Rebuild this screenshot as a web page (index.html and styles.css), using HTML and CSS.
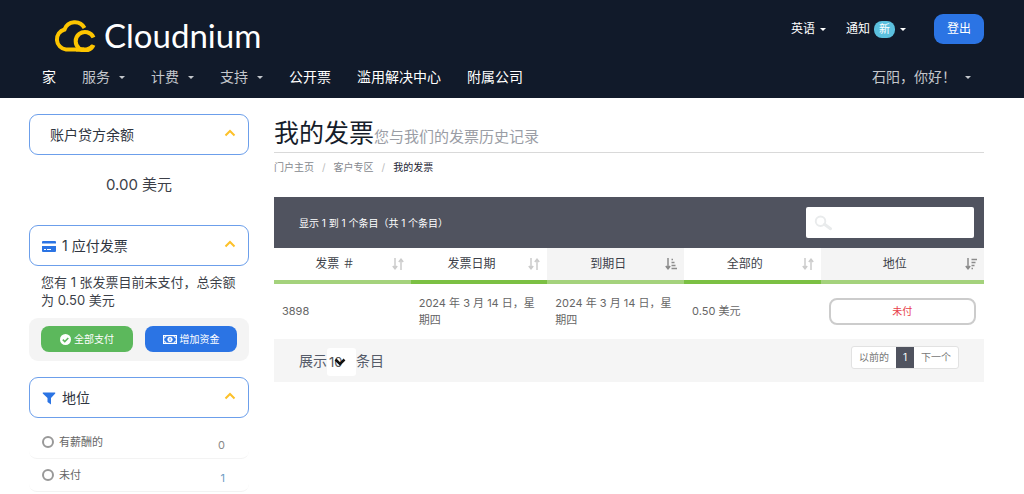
FILE: index.html
```
<!DOCTYPE html>
<html lang="zh-CN">
<head>
<meta charset="utf-8">
<title>我的发票 - Cloudnium</title>
<link rel="stylesheet" href="styles.css">
</head>
<body>
<header class="header">
  <div class="header-top">
    <a class="logo" href="#">
      <svg class="logo-mark" viewBox="0 0 42 34" fill="none" stroke="#fdc500" stroke-width="4">
        <path d="M30.500 10A11 11 0 0 0 10.500 11.500A10.200 10.200 0 0 0 12 31.500H30"/>
        <path d="M39.500 19.500A9.300 9.300 0 1 0 39.500 27"/>
        <path d="M22 31.500h8q5.500 0 8.500-3.500"/>
      </svg>
      <span>Cloudnium</span>
    </a>
    <div class="tools">
      <a class="tool" href="#">英语 <i class="caret"></i></a>
      <a class="tool" href="#">通知 <span class="badge">新</span><i class="caret"></i></a>
      <button class="logout" type="button">登出</button>
    </div>
  </div>
  <nav class="nav">
    <a href="#">家</a>
    <a class="muted" href="#">服务 <i class="caret"></i></a>
    <a class="muted" href="#">计费 <i class="caret"></i></a>
    <a class="muted" href="#">支持 <i class="caret"></i></a>
    <a href="#">公开票</a>
    <a href="#">滥用解决中心</a>
    <a href="#">附属公司</a>
    <a class="muted account" href="#">石阳，你好！ <i class="caret"></i></a>
  </nav>
</header>
<div class="page">
  <aside class="sidebar">
    <section>
      <h2 class="panel-title plain"><span>账户贷方余额</span>
        <svg class="chevron" viewBox="0 0 12 8"><path d="M1.500 6.500 6 2l4.500 4.500"/></svg></h2>
      <p class="balance">0.00 美元</p>
    </section>
    <section class="due">
      <h2 class="panel-title">
        <svg class="icon" viewBox="0 0 14 14" fill="#2b74e4"><path d="M1 2h12q1 0 1 1v1.500H0V3q0-1 1-1zM0 7h14v5q0 1-1 1H1q-1 0-1-1z"/><path d="M2 10.500h2M5 10.500h4" stroke="#fff"/></svg>
        <span>1 应付发票</span>
        <svg class="chevron" viewBox="0 0 12 8"><path d="M1.500 6.500 6 2l4.500 4.500"/></svg></h2>
      <p class="due-text">您有 1 张发票目前未支付，总余额为 0.50 美元</p>
      <div class="due-actions">
        <button class="btn green" type="button"><svg viewBox="0 0 11 11" width="11" height="11"><circle cx="5.500" cy="5.500" r="5.500" fill="#fff"/><path d="m2.800 5.600 2 2 3.500-3.600" fill="none" stroke="#5cb85c" stroke-width="1.600"/></svg>全部支付</button>
        <button class="btn blue" type="button"><svg viewBox="0 0 14 9" width="14" height="9" fill="none" stroke="#fff"><rect x=".6" y=".6" width="12.800" height="7.800" stroke-width="1.200"/><circle cx="7" cy="4.500" r="2.200" fill="#fff"/><path d="M1 3q1.500 0 2-2M13 3q-1.500 0-2-2M1 6q1.500 0 2 2M13 6q-1.500 0-2 2"/><path d="M7 3.200v2.600" stroke="#2b74e4"/></svg>增加资金</button>
      </div>
    </section>
    <section>
      <h2 class="panel-title">
        <svg class="icon" viewBox="0 0 14 14" fill="#2b74e4"><path d="M1 1.500h12q.8.500 0 1.200L9 7v6.500L5.500 11V7L1 2.700q-.8-.7 0-1.200z"/></svg>
        <span>地位</span>
        <svg class="chevron" viewBox="0 0 12 8"><path d="M1.500 6.500 6 2l4.500 4.500"/></svg></h2>
      <div class="filters">
        <label class="filter"><input type="radio" name="status"><span>有薪酬的</span><span class="count">0</span></label>
        <label class="filter"><input type="radio" name="status"><span>未付</span><span class="count active">1</span></label>
      </div>
    </section>
  </aside>
  <main class="main">
    <div class="heading"><h1>我的发票</h1><span>您与我们的发票历史记录</span></div>
    <nav class="crumbs"><a href="#">门户主页</a><i>/</i><a href="#">客户专区</a><i>/</i><b>我的发票</b></nav>
    <div class="table-bar">
      <span>显示 1 到 1 个条目（共 1 个条目）</span>
      <label class="search">
        <svg viewBox="0 0 22 18" width="22" height="18" fill="none" stroke="#e9ebec"><circle cx="7.500" cy="7" r="5.500" stroke-width="2.200"/><path d="m12 10.500 7 5" stroke-width="3.500" stroke-linecap="round"/></svg>
        <input type="search" aria-label="搜索">
      </label>
    </div>
    <table class="invoices">
      <thead>
        <tr>
          <th><div><span>发票 ＃</span><svg class="sort" viewBox="0 0 12 12"><path d="M3 0v10M.8 8 3 10.800 5.200 8M9 12V2M6.800 4 9 1.200 11.200 4"/></svg></div></th>
          <th><div><span>发票日期</span><svg class="sort" viewBox="0 0 12 12"><path d="M3 0v10M.8 8 3 10.800 5.200 8M9 12V2M6.800 4 9 1.200 11.200 4"/></svg></div></th>
          <th class="on"><div><span>到期日</span><svg class="sort" viewBox="0 0 12 12"><path d="M3 0v10M.8 8 3 10.800 5.200 8M6.500 1.500h1.500M6.500 4.500h3M6.500 7.500h4M6.500 10.500h5.500"/></svg></div></th>
          <th><div><span>全部的</span><svg class="sort" viewBox="0 0 12 12"><path d="M3 0v10M.8 8 3 10.800 5.200 8M9 12V2M6.800 4 9 1.200 11.200 4"/></svg></div></th>
          <th class="on"><div><span>地位</span><svg class="sort" viewBox="0 0 12 12"><path d="M3 0v10M.8 8 3 10.800 5.200 8M6.500 1.500h5.500M6.500 4.500h4M6.500 7.500h3M6.500 10.500h1.500"/></svg></div></th>
        </tr>
      </thead>
      <tbody>
        <tr><td>3898</td><td>2024 年 3 月 14 日，星期四</td><td>2024 年 3 月 14 日，星期四</td><td>0.50 美元</td><td><span class="status">未付</span></td></tr>
      </tbody>
    </table>
    <div class="table-foot">
      <label class="length">展示
        <span class="select"><select><option>10</option></select><svg viewBox="0 0 12 8"><path d="M1.500 1.500 6 6l4.500-4.500"/></svg></span>
        条目</label>
      <div class="pager"><a href="#">以前的</a><a class="current" href="#">1</a><a href="#">下一个</a></div>
    </div>
  </main>
</div>
</body>
</html>
```
FILE: styles.css
```
* { box-sizing: border-box; }
body {
  margin: 0;
  background: #fff;
  color: #3c3f48;
  font: 12px/16px Inter, "Noto Sans CJK SC", sans-serif;
  overflow-x: hidden;
}
a { color: inherit; text-decoration: none; }
h1, h2, p { margin: 0; font-weight: 400; }
button { border: 0; font: inherit; color: #fff; cursor: pointer; }

.header { background: #111a2a; color: #fff; padding: 14px 40px 11px 42px; }
.header-top { display: flex; justify-content: space-between; align-items: flex-start; }
.logo { display: flex; align-items: center; gap: 8px; padding: 3px 0 0 12px; font: 33px/36px Lato, sans-serif; }
.logo-mark { width: 42px; height: 34px; }
.tools { display: flex; align-items: center; gap: 20px; }
.tool { display: flex; align-items: center; gap: 4px; }
.badge { background: #5bc0de; border-radius: 8px; padding: 0 5px; font-size: 11px; line-height: 17px; }
.caret { display: inline-block; border: 3px solid transparent; border-top-color: currentColor; border-bottom: 0; margin-left: 1px; }
.logout { background: #2b74e4; border-radius: 9px; width: 50px; height: 30px; padding: 0; margin-left: 8px; }
.nav { display: flex; align-items: center; gap: 26px; margin-top: 14px; font-size: 14px; line-height: 20px; }
.nav > .muted { color: #c4c7cc; display: flex; align-items: center; gap: 8px; }
.nav > .account { margin-left: auto; padding-right: 13px; }

.page { display: grid; grid-template-columns: 220px minmax(0, 1fr); gap: 25px; padding: 16px 40px 0 29px; }
.panel-title { display: flex; align-items: center; gap: 6px; height: 41px; padding: 0 12px; border: 1px solid #6c9feb; border-radius: 9px; font-size: 14px; color: #2f3541; }
.plain { padding-left: 20px; }
.icon { width: 14px; height: 14px; }
.chevron { width: 12px; height: 8px; margin-left: auto; margin-bottom: 4px; fill: none; stroke: #fdc129; stroke-width: 2; }
.balance { padding: 20px 0 30px; text-align: center; font-size: 15px; line-height: 20px; }
.due-text { padding: 7px 12px 9px; font-size: 13px; line-height: 18px; }
.due-actions { display: grid; grid-template-columns: 1fr 1fr; gap: 12px; background: #f4f4f4; border-radius: 9px; padding: 8px 12px 9px; margin-bottom: 16px; }
.btn { display: flex; align-items: center; justify-content: center; gap: 3px; height: 26px; padding: 0; border-radius: 8px; font-size: 10px; }
.green { background: #5cb85c; }
.blue { background: #2b74e4; }
.filters { padding-top: 8px; }
.filter { display: flex; align-items: center; gap: 5px; height: 33px; padding: 0 24px 0 13px; border-bottom: 1px solid #f3f3f3; border-radius: 8px; font-size: 11px; color: #666; }
.filter input { appearance: none; width: 12px; height: 12px; margin: 0; border: 2px solid #999; border-radius: 50%; }
.count { margin-left: auto; padding-top: 5px; color: #888; }
.active { color: #6f9cc4; }

.heading { display: flex; align-items: baseline; border-bottom: 1px solid #d9d9d9; line-height: 20px; }
.heading h1 { font-size: 25px; line-height: 38px; color: #161d2b; }
.heading span { font-size: 15px; color: #9a9da5; }
.crumbs { display: flex; gap: 8px; padding-top: 6px; font-size: 10px; color: #85888e; }
.crumbs i { color: #bbb; font-style: normal; }
.crumbs b { font-weight: 400; color: #1d2533; }
.table-bar { display: flex; align-items: center; justify-content: space-between; margin-top: 22px; padding: 10px 10px 10px 25px; background: #50535f; color: #fff; font-size: 10px; }
.search { display: flex; align-items: center; width: 168px; height: 31px; padding: 0 8px; background: #fff; border-radius: 2px; }
.search input { width: 100%; border: 0; outline: 0; background: none; }
.invoices { width: 100%; table-layout: fixed; border-collapse: collapse; }
.invoices th { width: 19.25%; height: 34px; padding: 0 7px 0 0; border-bottom: 4px solid #7bc043; font-weight: 400; }
.invoices th:first-child, .invoices th.on { border-bottom-color: #a4d27c; }
.invoices th:last-child { width: 23%; }
.invoices th.on { background: #f4f4f4; }
.invoices th div { display: flex; align-items: center; }
.invoices th span { flex: 1; padding-left: 4px; }
.sort { width: 12px; height: 12px; fill: none; stroke: #ccc; stroke-width: 1.5; }
.on .sort { stroke: #8b8b8b; }
.invoices td { height: 57px; padding: 0 8px; font-size: 11px; line-height: 17px; color: #666; }
.status { display: block; border: 2px solid #ccc; border-radius: 8px; line-height: 23px; text-align: center; font-size: 10px; color: #e8404a; }
.table-foot { display: flex; align-items: flex-start; justify-content: space-between; padding: 7px 25px 6px; background: #f5f5f5; }
.length { display: flex; align-items: center; font-size: 14px; color: #555b69; }
.select { display: grid; align-items: center; width: 29px; height: 28px; margin-top: 2px; background: #fff; border-radius: 3px; }
.select select, .select svg { grid-area: 1 / 1; }
.select select { appearance: none; width: 29px; height: 27px; padding: 0 0 0 2px; border: 0; background: none; font: inherit; font-size: 13px; color: #555; }
.select svg { width: 12px; height: 8px; margin-left: 7px; fill: none; stroke: #111; stroke-width: 2.5; pointer-events: none; }
.pager { display: flex; border: 1px solid #e2e2e2; border-radius: 3px; background: #fff; font-size: 10px; line-height: 21px; color: #777; }
.pager a { padding: 0 7px; }
.pager .current { background: #50535f; color: #fff; }
```
